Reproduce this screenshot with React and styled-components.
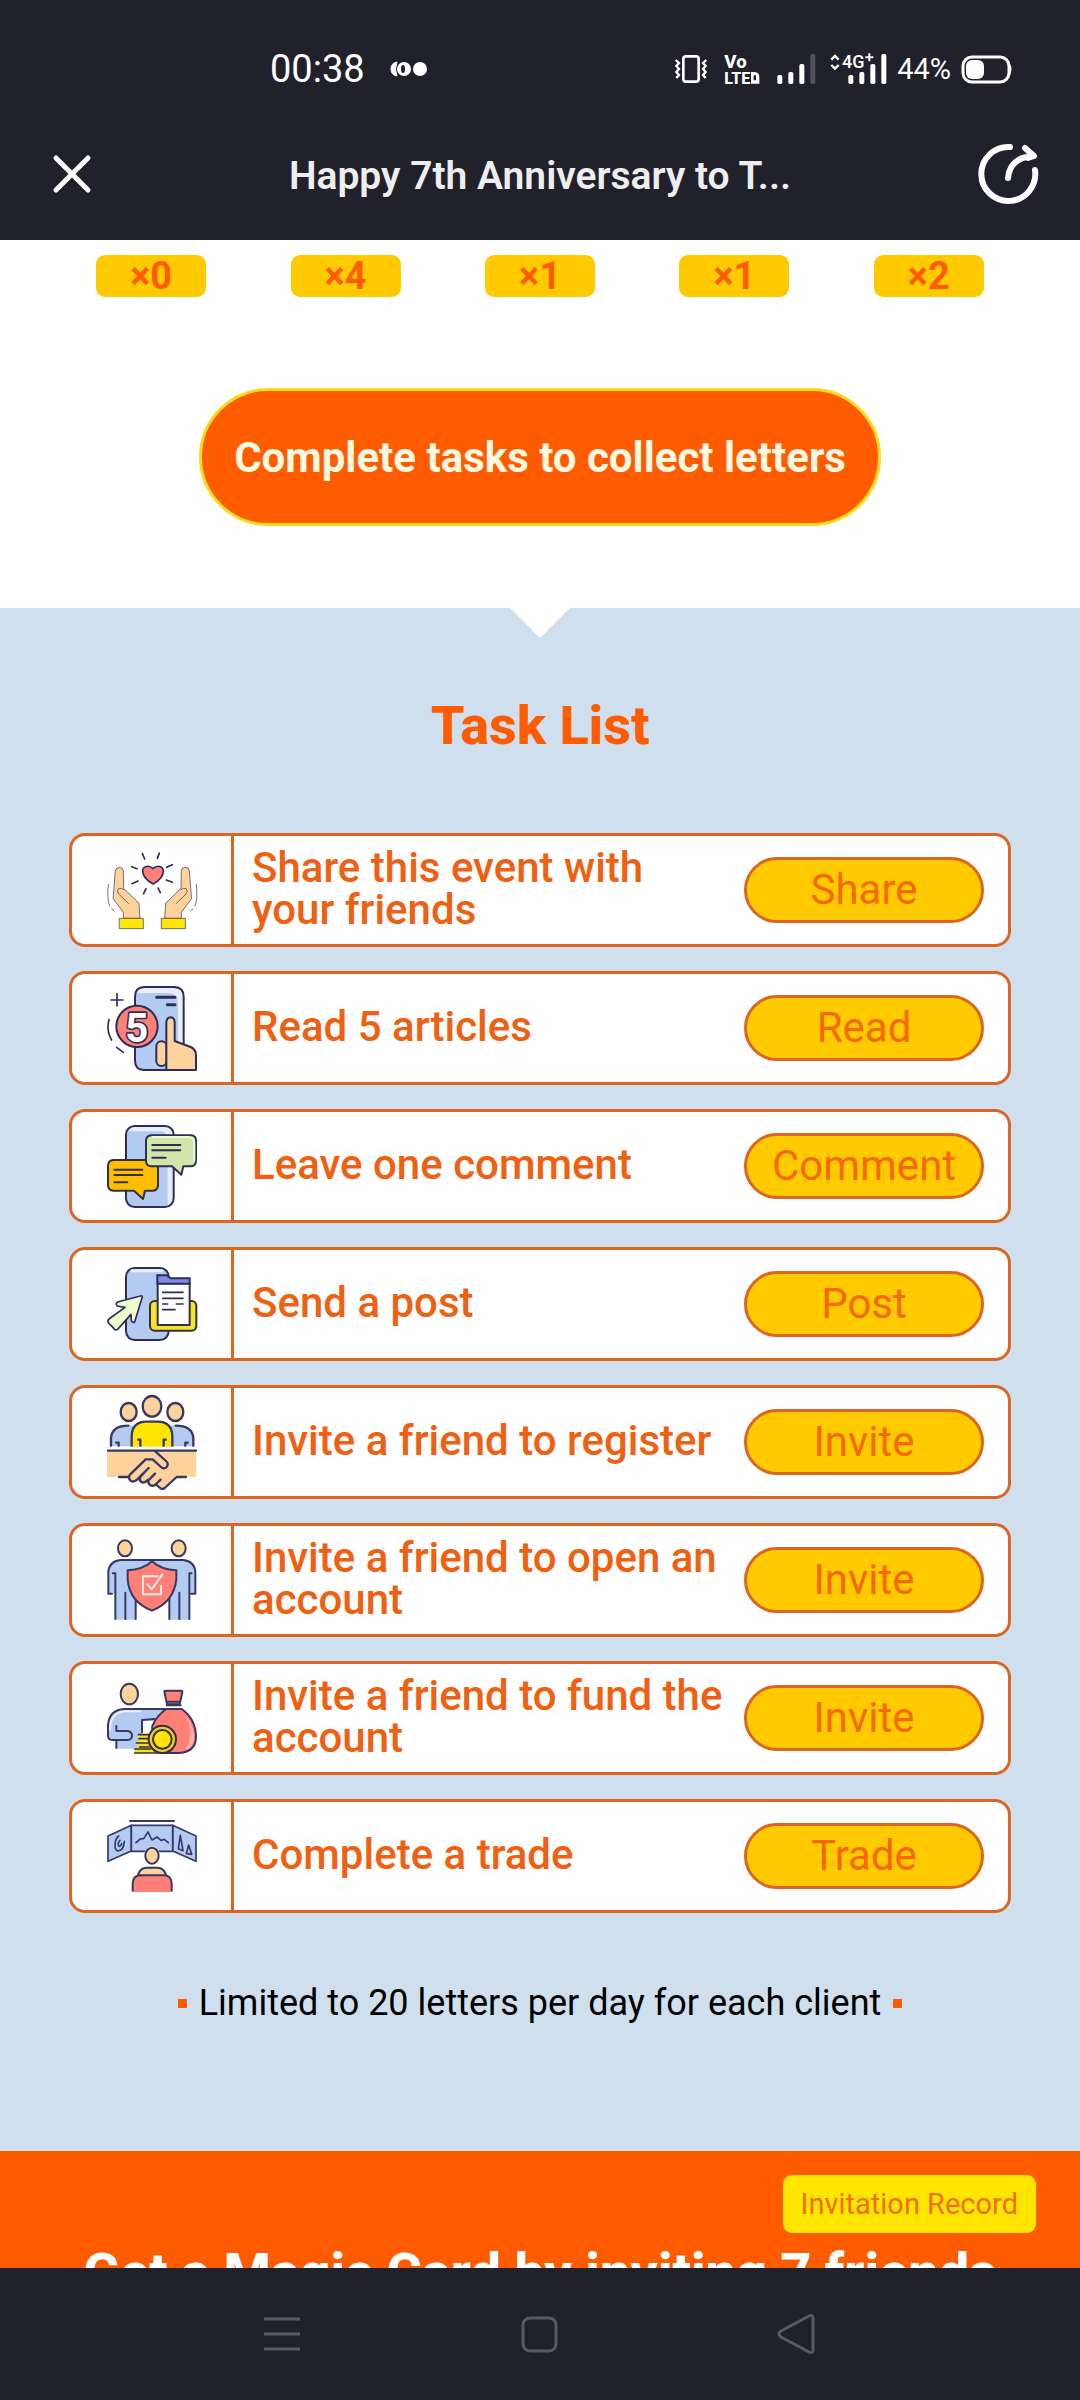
import styled, { createGlobalStyle } from "styled-components";

const GlobalStyle = createGlobalStyle`
  * {
    box-sizing: border-box;
  }
  body {
    margin: 0;
    font-family: Roboto, "Liberation Sans", sans-serif;
  }
  h1, h2, p, ul {
    margin: 0;
    padding: 0;
  }
  button {
    padding: 0;
    border: none;
    background: none;
    font-family: inherit;
    cursor: pointer;
  }
`;

const StyledPage = styled.div`
  display: flex;
  flex-direction: column;
  height: 100vh;
  background: #fff;
`;

const StyledStatusBar = styled.div`
  display: flex;
  flex-shrink: 0;
  align-items: center;
  justify-content: space-between;
  height: 108px;
  padding: 30px 68px 0 270px;
  background: #21212b;
  color: #fff;
`;
const StyledStatusGroup = styled.div`
  display: flex;
  align-items: center;
  gap: ${(props) => props.$gap}px;
  font-size: ${(props) => props.$size}px;
  line-height: 40px;
  svg {
    display: block;
    overflow: visible;
  }
`;

const StyledTitleBar = styled.header`
  display: grid;
  flex-shrink: 0;
  grid-template-columns: 1fr auto 1fr;
  align-items: center;
  height: 132px;
  padding: 0 40px;
  background: #21212b;
  h1 {
    padding-top: 3px;
    color: #eee;
    font-size: 39px;
    font-weight: 600;
    line-height: 48px;
  }
  svg {
    display: block;
  }
`;
const StyledTitleButton = styled.button`
  justify-self: ${(props) => props.$side};
`;

const StyledMain = styled.main`
  flex: 1;
  min-height: 0;
  overflow: hidden;
`;

const StyledLetters = styled.section`
  padding: 15px 54px 82px;
  text-align: center;
`;
const StyledCounts = styled.div`
  display: grid;
  grid-template-columns: repeat(5, 1fr);
  justify-items: center;
  margin-bottom: 91px;
`;
const StyledCount = styled.span`
  width: 110px;
  height: 42px;
  border-radius: 9px;
  background: #ffcb00;
  color: #ff5c00;
  font-size: 38px;
  font-weight: 700;
  line-height: 42px;
`;
const StyledCollectButton = styled.button`
  height: 138px;
  padding: 0 32px;
  border: 3px solid #f5dc1e;
  border-radius: 69px;
  background: #ff5c00;
  color: #fff8e1;
  font-size: 42px;
  font-weight: 700;
`;

const StyledTasks = styled.section`
  display: flex;
  flex-direction: column;
  align-items: center;
  padding-bottom: 124px;
  background: #cfdfee;
  h2 {
    margin-top: 56px;
    color: #ff5c00;
    font-size: 54px;
    font-weight: 800;
    line-height: 64px;
  }
`;
const StyledNotch = styled.div`
  border: 30px solid transparent;
  border-top-color: #fff;
  border-bottom: none;
`;
const StyledTaskList = styled.ul`
  display: flex;
  flex-direction: column;
  align-self: stretch;
  gap: 24px;
  margin: 75px 69px 0;
  list-style: none;
`;
const StyledTask = styled.li`
  display: flex;
  align-items: center;
  height: 114px;
  padding-right: 24px;
  border: 3px solid #dd6522;
  border-radius: 16px;
  background: #fff;
  p {
    flex: 1;
    padding: 0 14px 2px 18px;
    color: #f06012;
    font-size: 42px;
    font-weight: 500;
    line-height: 42px;
  }
`;
const StyledTaskIcon = styled.div`
  display: flex;
  align-items: center;
  align-self: stretch;
  justify-content: center;
  width: 162px;
  border-right: 3px solid #dd6522;
  svg {
    overflow: visible;
  }
`;
const StyledTaskButton = styled.button`
  width: 240px;
  height: 66px;
  padding-bottom: 2px;
  border: 3px solid #dd6522;
  border-radius: 33px;
  background: #ffcb00;
  color: #f46a08;
  font-size: 42px;
`;
const StyledNote = styled.p`
  display: flex;
  align-items: center;
  gap: 12px;
  margin-top: 66px;
  color: #000;
  font-size: 36px;
  line-height: 48px;
  &::before,
  &::after {
    content: "";
    width: 9px;
    height: 9px;
    background: #ff5c00;
  }
`;

const StyledInvite = styled.section`
  display: flex;
  flex-direction: column;
  align-items: center;
  padding-top: 24px;
  background: #ff5c00;
  h2 {
    margin-top: 8px;
    color: #fff;
    font-size: 54px;
    font-weight: 800;
    line-height: 64px;
    white-space: nowrap;
  }
`;
const StyledRecordButton = styled.button`
  align-self: flex-end;
  height: 58px;
  margin-right: 44px;
  padding: 0 18px;
  border-radius: 9px;
  background: #ffe500;
  color: #ee7010;
  font-size: 29px;
`;

const StyledNavBar = styled.nav`
  display: flex;
  flex-shrink: 0;
  align-items: center;
  justify-content: center;
  gap: 217px;
  height: 132px;
  background: #21212b;
  svg {
    display: block;
  }
`;

const NAVY = "#2b2d5b";
const SKIN = "#fdd29b";
const BLUE = "#b3cbf1";
const CORAL = "#ff8077";

const iconProps = {
  width: 90,
  height: 96,
  fill: "none",
  stroke: NAVY,
  strokeWidth: 6,
  strokeLinecap: "round",
  strokeLinejoin: "round",
  "aria-hidden": true,
};

const Hand = ({ flipped }) => (
  <g strokeWidth="2" transform={flipped ? "matrix(-1 0 0 1 554 0)" : undefined}>
    <path
      d="M166 152Q168 142 178 142Q189 142 190 152L191 205L237 250L240 295H190V277L160 237Z"
      fill={SKIN}
    />
    <path d="M206 251L176 222Q168 213 176 206Q184 202 191 209" />
    <path d="M145 193Q140 238 149 258M155 267L162 273" />
    <rect x="179" y="295" width="71" height="31" fill="#ffe500" />
  </g>
);

const ShareIcon = () => (
  <svg {...iconProps} viewBox="141 66 270 288">
    <Hand />
    <Hand flipped />
    <path
      d="M279 192C258 180 248 168 248 153C248 138 268 134 279 146C290 134 310 138 310 153C310 168 298 182 279 192Z"
      fill={CORAL}
      strokeWidth="5"
    />
    <path
      d="M247 101L254 117M298 99L292 115M215 140L231 146M337 134L320 142M216 191L234 183M319 180L337 187M251 221L258 206M301 218L294 204"
      strokeWidth="5"
    />
  </svg>
);

const ReadIcon = () => (
  <svg {...iconProps} viewBox="141 480 270 288">
    <rect x="224" y="501" width="148" height="249" rx="28" fill="#e7effc" stroke="none" />
    <path
      d="M227 519H328Q352 521 354 545V747H250Q227 745 227 722Z"
      fill={BLUE}
      stroke="none"
    />
    <path d="M318 750H250Q225 748 225 722V530Q225 502 253 501H343Q371 502 371 530V670" />
    <path d="M290 532H345M322 554H345" strokeWidth="9" />
    <rect x="289" y="664" width="31" height="74" rx="15" fill={SKIN} />
    <path
      d="M319 750V606Q321 592 332 592Q343 593 344 606V663L392 681Q408 688 408 706V750Z"
      fill={SKIN}
    />
    <circle cx="231" cy="619" r="62" fill={CORAL} />
    <text
      x="230"
      y="665"
      fill="#fff"
      fontSize="120"
      fontWeight="700"
      textAnchor="middle"
      paintOrder="stroke"
      strokeWidth="10"
    >
      5
    </text>
    <path d="M153 540H189M171 521V558M147 599Q138 632 155 660M170 682L190 697" strokeWidth="5" />
  </svg>
);

const CommentIcon = () => (
  <svg {...iconProps} viewBox="141 84 270 288">
    <rect x="198" y="108" width="143" height="243" rx="26" fill="#e7effc" stroke="none" />
    <path d="M200 124H303Q323 126 323 148V349H222Q202 347 200 325Z" fill={BLUE} stroke="none" />
    <rect x="198" y="108" width="143" height="243" rx="26" />
    <path
      d="M160 210H279Q294 211 294 226V286Q293 301 279 302H255L249 327L222 302H160Q145 301 144 286V226Q145 211 160 210Z"
      fill="#ffbf00"
      stroke="#333039"
    />
    <path d="M163 239H247M163 255H247M163 277H202" stroke="#333039" />
    <path
      d="M274 136H393Q408 137 408 152V213Q407 228 393 229H370L364 254L336 229H274Q259 228 258 213V152Q259 137 274 136Z"
      fill="#d3e6a9"
    />
    <path d="M277 141H387Q402 143 403 156V212" stroke="#effbd5" />
    <path d="M277 165H361M277 181H361M277 203H317" />
  </svg>
);

const PostIcon = () => (
  <svg {...iconProps} viewBox="141 498 270 288">
    <rect x="198" y="534" width="128" height="216" rx="26" fill={BLUE} />
    <path d="M216 542H306" stroke="#e7effc" strokeWidth="9" />
    <rect x="270" y="633" width="139" height="89" rx="14" fill="#f5e32d" stroke="#333039" />
    <path d="M293 580H389V705H293Z" fill="#fff" stroke="#333039" />
    <path d="M292 581V556H321L332 565H389V581Z" fill="#8289e6" strokeLinejoin="miter" />
    <path d="M308 607H369M308 625H369M308 642H323M349 642H369M308 659H345" strokeWidth="5" />
    <path
      d="M247 620L224 696Q218 700 214 692L213 673L173 718Q167 722 162 716L146 699Q141 693 147 687L195 652L172 648Q165 641 173 636L241 618Q247 617 247 620Z"
      fill="#f1fdc8"
      strokeWidth="5"
    />
  </svg>
);

const RegisterIcon = () => (
  <svg {...iconProps} viewBox="141 71 270 288" stroke="#363965" strokeWidth="7">
    <path
      d="M152 228V200Q155 170 190 165H220V228ZM400 228V200Q397 170 362 165H332V228Z"
      fill={BLUE}
      stroke="none"
    />
    <path d="M153 226V202Q157 166 205 166M400 226V202Q396 166 347 166M169 217H176V226M383 217H376V226" />
    <ellipse cx="206" cy="125" rx="24" ry="27" fill={SKIN} />
    <ellipse cx="346" cy="125" rx="24" ry="27" fill={SKIN} />
    <ellipse cx="276" cy="108" rx="28" ry="31" fill={SKIN} />
    <path d="M215 229V196Q217 155 258 154H294Q335 155 337 196V229Z" fill="#ffe500" stroke="none" />
    <path d="M215 226V196Q217 155 258 154H294Q335 155 337 196V226M235 208H241V226M317 208H311V226" />
    <path
      d="M141 243H408V320H350L314 353Q305 361 294 347Q280 353 271 340Q256 343 249 331Q222 340 207 320H141Z"
      fill={SKIN}
      stroke="none"
    />
    <path d="M144 241H408M177 320H205M378 320H350L314 353Q306 360 297 350L288 342M286 243L318 272Q327 280 320 290Q311 298 303 290L278 267H257L210 313Q203 323 212 331Q221 337 231 328L266 293M285 310L268 327Q261 336 270 344Q280 350 288 341L302 328M257 302L240 321Q238 333 247 336Q255 338 263 329" />
  </svg>
);

const AccountIcon = () => (
  <svg {...iconProps} viewBox="141 486 270 288" stroke="#363965">
    <path
      d="M145 671V606Q147 574 181 570H370Q404 574 406 606V671H388V749H328V670H227V749H166V671Z"
      fill={BLUE}
      stroke="none"
    />
    <path d="M156 671H145V606Q147 574 181 570H370Q404 574 406 606V671H393M158 610H166V747M196 668V747M227 675V747M395 610H388V747M358 668V747M328 675V747" />
    <ellipse cx="195" cy="535" rx="21" ry="24" fill={SKIN} />
    <ellipse cx="356" cy="535" rx="21" ry="24" fill={SKIN} />
    <path
      d="M276 574Q303 599 349 601V628Q342 695 276 722Q208 695 203 628V601Q249 599 276 574Z"
      fill={CORAL}
    />
    <path d="M295 619H249V673H303V645M261 641L275 658L309 611" stroke="#ffe9e7" strokeLinecap="butt" />
  </svg>
);

const FundIcon = () => (
  <svg {...iconProps} viewBox="141 60 270 288" stroke="#363965">
    <path
      d="M144 270V225Q148 179 193 177H315L285 212H246V296H168V270Z"
      fill={BLUE}
      stroke="none"
    />
    <path d="M150 240Q150 188 195 184H240" stroke="#e7effc" />
    <path d="M317 177H193Q148 179 144 225V258Q145 270 157 270H203Q216 268 216 257Q216 245 203 243H169V228M169 273V294M246 247V210L283 207" />
    <ellipse cx="208" cy="132" rx="26" ry="31" fill={SKIN} />
    <path
      d="M318 177H365C395 198 408 225 408 262Q407 309 352 309H310C285 295 270 230 280 222Q288 201 318 177Z"
      fill={CORAL}
    />
    <path d="M374 195Q408 245 376 300Q402 292 402 262Q402 228 374 195Z" fill="#ffb0aa" stroke="none" />
    <path d="M321 163L313 125Q312 122 318 122H363Q368 122 367 126L359 163ZM320 155H360M320 166H362" fill={CORAL} />
    <path d="M230 254H290V309H224V294H237L228 279H238Z" fill="#f8df27" stroke="none" />
    <path
      d="M235 254H274M237 266H265M229 279H265M239 291H268M224 297H272M224 309H310"
      stroke="#333039"
      strokeWidth="5"
    />
    <circle cx="307" cy="268" r="41" fill="#eccf2d" stroke="#333039" />
    <circle cx="307" cy="268" r="28" fill="#ffe500" stroke="#333039" />
  </svg>
);

const TradeIcon = () => (
  <svg {...iconProps} viewBox="141 474 270 288" stroke="#363965" strokeWidth="5">
    <path d="M210 513H342" strokeWidth="6" />
    <path d="M144 558L214 526V603L144 634Z" fill={BLUE} />
    <path d="M408 558L338 526V603L408 634Z" fill={BLUE} />
    <path d="M214 526H338V604H214Z" fill={BLUE} />
    <path d="M228 578L241 567L251 566L264 546L276 570L291 561L303 571L313 568L325 578M176 558C163 568 161 598 173 603C188 602 192 590 193 574M180 571C173 578 173 588 178 589Q184 588 185 581M355 596L361 556L369 602ZM379 610L386 585L395 613Z" />
    <ellipse cx="276" cy="617" rx="24" ry="28" fill="#fff" stroke="none" />
    <ellipse cx="276" cy="617" rx="20" ry="24" fill={SKIN} strokeWidth="6" />
    <path d="M233 678Q239 653 260 653H292Q313 653 319 678Z" fill={SKIN} strokeWidth="6" />
    <path
      d="M218 726V700Q219 677 240 676H313Q334 677 335 700V726Z"
      fill={CORAL}
      stroke="none"
    />
    <path d="M218 722V700Q219 677 240 676H313Q334 677 335 700V722" strokeWidth="6" />
  </svg>
);

const counts = [0, 4, 1, 1, 2];

const tasks = [
  { text: "Share this event with your friends", action: "Share", Icon: ShareIcon },
  { text: "Read 5 articles", action: "Read", Icon: ReadIcon },
  { text: "Leave one comment", action: "Comment", Icon: CommentIcon },
  { text: "Send a post", action: "Post", Icon: PostIcon },
  { text: "Invite a friend to register", action: "Invite", Icon: RegisterIcon },
  { text: "Invite a friend to open an account", action: "Invite", Icon: AccountIcon },
  { text: "Invite a friend to fund the account", action: "Invite", Icon: FundIcon },
  { text: "Complete a trade", action: "Trade", Icon: TradeIcon },
];

const StatusBar = () => (
  <StyledStatusBar>
    <StyledStatusGroup $gap={26} $size={38}>
      <span>00:38</span>
      <svg width="36" height="16" viewBox="0 0 36 16" fill="#fff">
        <path d="M6 1Q0 2 0 8Q0 14 6 15Q3 8 6 1Z" stroke="#fff" />
        <ellipse cx="13" cy="8" rx="7" ry="7" />
        <ellipse cx="12" cy="8" rx="2" ry="4" fill="#21212b" />
        <circle cx="29" cy="8" r="7" />
      </svg>
    </StyledStatusGroup>
    <StyledStatusGroup $gap={10} $size={29}>
      <svg width="212" height="30" viewBox="113 72 636 90" fill="#fff">
        <rect x="138" y="79" width="46" height="76" rx="8" fill="none" stroke="#fff" strokeWidth="8" />
        <path
          d="M115 90L125 99L117 108L125 117L117 126L125 135L117 144M207 90L197 99L205 108L197 117L205 126L197 135L205 144"
          fill="none"
          stroke="#fff"
          strokeWidth="7"
        />
        <text x="261" y="114" fontSize="56" fontWeight="800">
          Vo
        </text>
        <text x="261" y="161" fontSize="48" fontWeight="800">
          LTE
        </text>
        <path d="M341 126H352Q366 127 366 141V161H341Z M349 136V151H356V136Z" fillRule="evenodd" />
        <rect x="420" y="135" width="15" height="27" rx="5" />
        <rect x="453" y="126" width="15" height="36" rx="5" />
        <rect x="486" y="102" width="15" height="60" rx="5" />
        <rect x="519" y="72" width="15" height="90" rx="5" fill="#51515a" />
        <path d="M582 89L593 78L604 89M582 105L593 116L604 105" fill="none" stroke="#fff" strokeWidth="7" />
        <text x="614" y="115" fontSize="54" fontWeight="500">
          4G
        </text>
        <path d="M684 82H708M696 70V94" stroke="#fff" strokeWidth="6" />
        <rect x="633" y="135" width="15" height="27" rx="5" />
        <rect x="666" y="126" width="15" height="36" rx="5" />
        <rect x="699" y="102" width="15" height="60" rx="5" />
        <rect x="732" y="72" width="15" height="90" rx="5" />
      </svg>
      <span>44%</span>
      <svg width="51" height="30" viewBox="0 0 51 30">
        <rect x="2" y="3" width="46" height="25" rx="9" fill="none" stroke="#fff" strokeWidth="3" />
        <rect x="5" y="6" width="18" height="19" rx="6" fill="#fff" />
        <path d="M49 10Q52 15 49 21Z" fill="#fff" />
      </svg>
    </StyledStatusGroup>
  </StyledStatusBar>
);

const TitleBar = () => (
  <StyledTitleBar>
    <StyledTitleButton $side="start" aria-label="Close">
      <svg width="64" height="44" viewBox="0 0 64 44" stroke="#fff" strokeWidth="5" strokeLinecap="round">
        <path d="M16 6L48 38M48 6L16 38" />
      </svg>
    </StyledTitleButton>
    <h1>Happy 7th Anniversary to T...</h1>
    <StyledTitleButton $side="end" aria-label="Share">
      <svg
        width="64"
        height="64"
        viewBox="0 0 64 64"
        fill="none"
        stroke="#fff"
        strokeWidth="6"
        strokeLinecap="round"
        strokeLinejoin="round"
      >
        <path d="M34 5A27 27 0 1 0 59 28" />
        <path d="M32 36Q34 15 58 14L49 6M58 14L52 16" />
      </svg>
    </StyledTitleButton>
  </StyledTitleBar>
);

const TaskItem = ({ task }) => {
  const { text, action, Icon } = task;

  return (
    <StyledTask>
      <StyledTaskIcon>
        <Icon />
      </StyledTaskIcon>
      <p>{text}</p>
      <StyledTaskButton>{action}</StyledTaskButton>
    </StyledTask>
  );
};

const NavBar = () => (
  <StyledNavBar>
    <button aria-label="Recent apps">
      <svg width="40" height="40" viewBox="0 0 40 40" stroke="#5a5a62" strokeWidth="3">
        <path d="M1 5H37M1 20H37M1 35H37" />
      </svg>
    </button>
    <button aria-label="Home">
      <svg width="40" height="40" viewBox="0 0 40 40" fill="none" stroke="#5a5a62" strokeWidth="3">
        <rect x="3" y="4" width="33" height="33" rx="7" />
      </svg>
    </button>
    <button aria-label="Back">
      <svg
        width="40"
        height="40"
        viewBox="0 0 40 40"
        fill="none"
        stroke="#5a5a62"
        strokeWidth="3"
        strokeLinejoin="round"
      >
        <path d="M32 2Q36 0 36 4V36Q36 40 32 38L4 23Q0 20 4 17Z" />
      </svg>
    </button>
  </StyledNavBar>
);

const App = () => {
  return (
    <>
      <GlobalStyle />
      <StyledPage>
        <StatusBar />
        <TitleBar />
        <StyledMain>
          <StyledLetters>
            <StyledCounts>
              {counts.map((count, index) => (
                <StyledCount key={index}>×{count}</StyledCount>
              ))}
            </StyledCounts>
            <StyledCollectButton>Complete tasks to collect letters</StyledCollectButton>
          </StyledLetters>
          <StyledTasks>
            <StyledNotch />
            <h2>Task List</h2>
            <StyledTaskList>
              {tasks.map((task) => (
                <TaskItem key={task.text} task={task} />
              ))}
            </StyledTaskList>
            <StyledNote>Limited to 20 letters per day for each client</StyledNote>
          </StyledTasks>
          <StyledInvite>
            <StyledRecordButton>Invitation Record</StyledRecordButton>
            <h2>Get a Magic Card by inviting 7 friends</h2>
          </StyledInvite>
        </StyledMain>
        <NavBar />
      </StyledPage>
    </>
  );
};

export default App;
